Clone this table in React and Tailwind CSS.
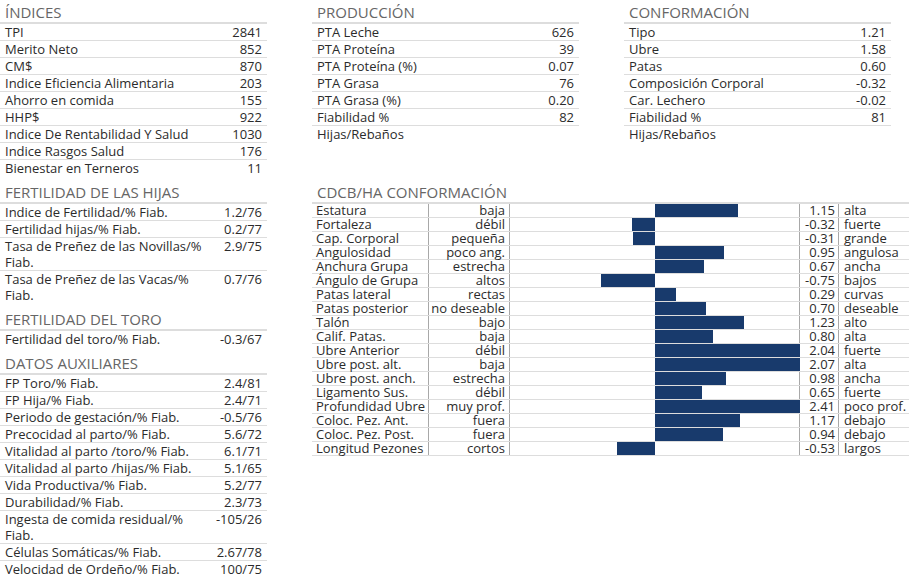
const indices = [
  ["TPI", "2841"],
  ["Merito Neto", "852"],
  ["CM$", "870"],
  ["Indice Eficiencia Alimentaria", "203"],
  ["Ahorro en comida", "155"],
  ["HHP$", "922"],
  ["Indice De Rentabilidad Y Salud", "1030"],
  ["Indice Rasgos Salud", "176"],
  ["Bienestar en Terneros", "11"],
];

const produccion = [
  ["PTA Leche", "626"],
  ["PTA Proteína", "39"],
  ["PTA Proteína (%)", "0.07"],
  ["PTA Grasa", "76"],
  ["PTA Grasa (%)", "0.20"],
  ["Fiabilidad %", "82"],
  ["Hijas/Rebaños", ""],
];

const conformacion = [
  ["Tipo", "1.21"],
  ["Ubre", "1.58"],
  ["Patas", "0.60"],
  ["Composición Corporal", "-0.32"],
  ["Car. Lechero", "-0.02"],
  ["Fiabilidad %", "81"],
  ["Hijas/Rebaños", ""],
];

const fertHijas = [
  ["Indice de Fertilidad/% Fiab.", "1.2/76"],
  ["Fertilidad hijas/% Fiab.", "0.2/77"],
  ["Tasa de Preñez de las Novillas/% Fiab.", "2.9/75"],
  ["Tasa de Preñez de las Vacas/% Fiab.", "0.7/76"],
];

const fertToro = [["Fertilidad del toro/% Fiab.", "-0.3/67"]];

const auxiliares = [
  ["FP Toro/% Fiab.", "2.4/81"],
  ["FP Hija/% Fiab.", "2.4/71"],
  ["Periodo de gestación/% Fiab.", "-0.5/76"],
  ["Precocidad al parto/% Fiab.", "5.6/72"],
  ["Vitalidad al parto /toro/% Fiab.", "6.1/71"],
  ["Vitalidad al parto /hijas/% Fiab.", "5.1/65"],
  ["Vida Productiva/% Fiab.", "5.2/77"],
  ["Durabilidad/% Fiab.", "2.3/73"],
  ["Ingesta de comida residual/% Fiab.", "-105/26"],
  ["Células Somáticas/% Fiab.", "2.67/78"],
  ["Velocidad de Ordeño/% Fiab.", "100/75"],
];

const rasgos = [
  ["Estatura", "baja", 1.15, "alta"],
  ["Fortaleza", "débil", -0.32, "fuerte"],
  ["Cap. Corporal", "pequeña", -0.31, "grande"],
  ["Angulosidad", "poco ang.", 0.95, "angulosa"],
  ["Anchura Grupa", "estrecha", 0.67, "ancha"],
  ["Ángulo de Grupa", "altos", -0.75, "bajos"],
  ["Patas lateral", "rectas", 0.29, "curvas"],
  ["Patas posterior", "no deseable", 0.7, "deseable"],
  ["Talón", "bajo", 1.23, "alto"],
  ["Calif. Patas.", "baja", 0.8, "alta"],
  ["Ubre Anterior", "débil", 2.04, "fuerte"],
  ["Ubre post. alt.", "baja", 2.07, "alta"],
  ["Ubre post. anch.", "estrecha", 0.98, "ancha"],
  ["Ligamento Sus.", "débil", 0.65, "fuerte"],
  ["Profundidad Ubre", "muy prof.", 2.41, "poco prof."],
  ["Coloc. Pez. Ant.", "fuera", 1.17, "debajo"],
  ["Coloc. Pez. Post.", "fuera", 0.94, "debajo"],
  ["Longitud Pezones", "cortos", -0.53, "largos"],
];

const Header = ({ children }) => (
  <h2 className="text-[15px] leading-[19px] pt-[3px] pl-[5px] text-[#666] uppercase border-b-2 border-[#ddd]">
    {children}
  </h2>
);

// simple two column table, last row has no border
const Table = ({ title, rows }) => (
  <div className="w-[267px]">
    <Header>{title}</Header>
    {rows.map(([label, value], i) => (
      <div
        key={i}
        className="flex justify-between px-[5px] text-[13px] leading-[16px] border-b border-[#ddd] last:border-b-0"
      >
        <span>{label}</span>
        <span>{value}</span>
      </div>
    ))}
  </div>
);

// label may wrap, value column kept narrow
const FiabTable = ({ title, rows }) => (
  <div className="w-[267px]">
    <Header>{title}</Header>
    {rows.map(([label, value], i) => (
      <div
        key={i}
        className="flex px-[5px] text-[13px] leading-[16px] border-b border-[#ddd] last:border-b-0"
      >
        <span className="flex-1 min-w-0">{label}</span>
        <span className="w-[56px] shrink-0 text-right">{value}</span>
      </div>
    ))}
  </div>
);

const SCALE = 72.5; // px per unit, range -2..2 over 290px

const Bar = ({ value }) => {
  const v = Math.max(-2, Math.min(2, value));
  const left = 145 + Math.min(v, 0) * SCALE;
  const width = Math.abs(v) * SCALE;
  return (
    <div
      className="absolute top-0 bottom-0 bg-[#183a6c]"
      style={{ left: `${left}px`, width: `${width}px` }}
    />
  );
};

const ConformacionChart = () => (
  <div>
    <Header>CDCB/HA Conformación</Header>
    {rasgos.map(([label, low, value, high], i) => (
      <div
        key={i}
        className="grid grid-cols-[117px_81px_290px_39px_1fr] h-[14px] text-[13px] leading-[13px] border-b border-[#ddd]"
      >
        <div className="pl-[4px] border-r border-[#a8a8a8] whitespace-nowrap">{label}</div>
        <div className="pr-[4px] text-right border-r border-[#a8a8a8] whitespace-nowrap">{low}</div>
        <div className="relative border-r border-[#a8a8a8]">
          <Bar value={value} />
        </div>
        <div className="pr-[3px] text-right border-r border-[#a8a8a8]">{value.toFixed(2)}</div>
        <div className="pl-[5px] whitespace-nowrap">{high}</div>
      </div>
    ))}
  </div>
);

export default function App() {
  return (
    <div className="w-[909px] h-[583px] bg-white text-[#2b2b2b] font-['Open_Sans',sans-serif] overflow-hidden">
      <div className="grid grid-cols-[312px_312px_1fr] gap-y-[4px]">
        <Table title="Índices" rows={indices} />
        <Table title="Producción" rows={produccion} />
        <Table title="Conformación" rows={conformacion} />

        <div className="flex flex-col gap-[4px]">
          <FiabTable title="Fertilidad de las hijas" rows={fertHijas} />
          <FiabTable title="Fertilidad del toro" rows={fertToro} />
          <FiabTable title="Datos auxiliares" rows={auxiliares} />
        </div>
        <div className="col-span-2">
          <ConformacionChart />
        </div>
      </div>
    </div>
  );
}
